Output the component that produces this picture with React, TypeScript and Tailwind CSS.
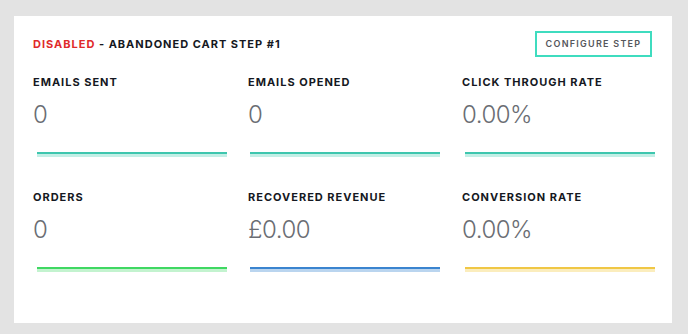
import React from "react";

type Metric = {
  label: string;
  value: string;
  dark: string;
  light: string;
  inset: string;
};

const metrics: Metric[] = [
  { label: "Emails Sent", value: "0", dark: "bg-[#3ec6ae]", light: "bg-[#c2efe6]", inset: "ml-[4px]" },
  { label: "Emails Opened", value: "0", dark: "bg-[#3ec6ae]", light: "bg-[#c2efe6]", inset: "ml-[2px]" },
  { label: "Click Through Rate", value: "0.00%", dark: "bg-[#3ec6ae]", light: "bg-[#c2efe6]", inset: "ml-[3px]" },
  { label: "Orders", value: "0", dark: "bg-[#3fd862]", light: "bg-[#c3f3cf]", inset: "ml-[4px]" },
  { label: "Recovered Revenue", value: "£0.00", dark: "bg-[#3a84cf]", light: "bg-[#bad5ef]", inset: "ml-[2px]" },
  { label: "Conversion Rate", value: "0.00%", dark: "bg-[#f0c745]", light: "bg-[#fbedbd]", inset: "ml-[3px]" },
];

function MetricCell({ m }: { m: Metric }) {
  return (
    <div className="flex flex-col">
      <div className="text-[11px] font-bold uppercase leading-[14px] tracking-[0.09em] text-[#151822]">
        {m.label}
      </div>
      <div className="mt-[12px] text-[24px] font-light leading-[28px] tracking-[-0.02em] text-[#6a6d73]">
        {m.value}
      </div>
      {/* two-tone underline */}
      <div className={`mt-[23px] w-[190px] ${m.inset}`}>
        <div className={`h-[2px] ${m.dark}`} />
        <div className={`h-[3px] ${m.light}`} />
      </div>
    </div>
  );
}

export default function App() {
  return (
    <main
      className="min-h-[334px] w-[688px] bg-[#e3e3e3] pl-[14px] pt-[16px]"
      style={{ fontFamily: "Inter, 'Noto Sans', sans-serif" }}
    >
      <section className="w-[658px] overflow-hidden bg-white pb-[51px] pl-[19px] pr-[20px] pt-[15px]">
        <div className="flex h-[26px] items-center justify-between">
          <h1 className="text-[11px] font-bold uppercase tracking-[0.09em] text-[#151822]">
            <span className="text-[#e02a2a]">Disabled</span> - Abandoned Cart Step #1
          </h1>
          <button className="flex h-[26px] w-[117px] items-center justify-center border-2 border-[#3fdcbf] text-[9px] font-semibold uppercase tracking-[0.14em] text-[#55575c]">
            Configure Step
          </button>
        </div>

        <div className="mt-[18px] grid grid-cols-[215px_214px_214px] gap-y-[33px]">
          {metrics.map((m) => (
            <MetricCell key={m.label} m={m} />
          ))}
        </div>
      </section>
    </main>
  );
}
